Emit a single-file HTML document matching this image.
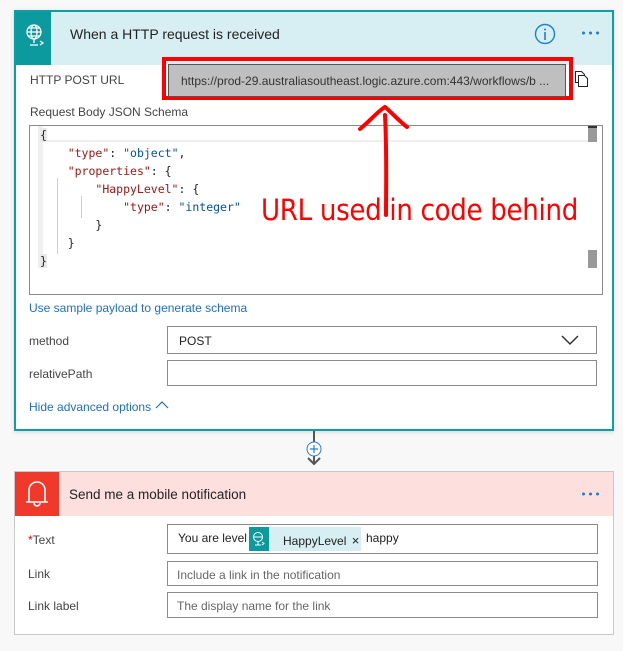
<!DOCTYPE html>
<html><head><meta charset="utf-8"><style>
*{margin:0;padding:0;box-sizing:border-box}
body{width:623px;height:651px;background:#f8f8f8;font-family:"Liberation Sans",sans-serif;position:relative;overflow:hidden;color:#333}
.a{position:absolute}
.lbl{font-size:12px;color:#444}
.inp{position:absolute;background:#fff;border:1px solid #8a8a8a}
.code{font-family:"DejaVu Sans Mono","Liberation Mono",monospace;font-size:11.5px;position:absolute;white-space:pre;color:#222}
.k{color:#a31515}.s{color:#0451a5}
</style></head><body>
<!-- card 1 -->
<div class="a" style="left:14px;top:10px;width:600px;height:421px;border:2px solid #0f9ea4;background:#fff;box-shadow:0 1px 4px rgba(0,0,0,.15)"></div>
<div class="a" style="left:16px;top:12px;width:596px;height:53px;background:#d7eff2"></div>
<div class="a" style="left:16px;top:12px;width:35px;height:53px;background:#0c9a9e"></div>
<svg class="a" style="left:24px;top:23px" width="22" height="26" viewBox="0 0 22 26" fill="none" stroke="#fff" stroke-width="1.3"><circle cx="10" cy="9" r="7"/><ellipse cx="10" cy="9" rx="3" ry="7"/><path d="M3 9h14M4 5h12M4 13h12M10 16v4M6 22h8M16 18l3 2-3 2"/></svg>
<div class="a" style="left:70px;top:26px;font-size:14px;color:#222">When a HTTP request is received</div>
<svg class="a" style="left:534px;top:23px" width="22" height="22"><circle cx="11" cy="11" r="9.5" fill="none" stroke="#1f7fd6" stroke-width="1.4"/><rect x="10.2" y="9" width="1.6" height="8" fill="#1f7fd6"/><circle cx="11" cy="6.5" r="1" fill="#1f7fd6"/></svg>
<div class="a" style="left:580px;top:31px;width:20px;height:4px;background:radial-gradient(circle,#1f7fd6 1.4px,transparent 1.6px) 0 0/7px 4px"></div>
<div class="a lbl" style="left:30px;top:73px">HTTP POST URL</div>
<div class="a" style="left:162px;top:57px;width:411px;height:43px;border:4px solid #f00"></div>
<div class="a" style="left:168px;top:64px;width:398px;height:33px;background:#bfbfbf;border:1px solid #555;font-size:12px;color:#333;padding:9px 0 0 12px">https://prod-29.australiasoutheast.logic.azure.com:443/workflows/b ...</div>
<svg class="a" style="left:572px;top:70px" width="18" height="18" fill="#fff" stroke="#222" stroke-width="1"><path d="M3.5 1.5h6l3 3v8h-9z"/><path d="M6.5 5.5h6l3 3v8h-9z"/></svg>
<div class="a lbl" style="left:30px;top:105px">Request Body JSON Schema</div>
<div class="a" style="left:29px;top:125px;width:574px;height:170px;border:1px solid #8a8a8a;background:#fff"></div>
<div class="a" style="left:38px;top:126px;width:564px;height:16px;border-bottom:2px solid #eee"></div>
<div class="a" style="left:38px;top:126px;width:5px;height:142px;background:#f0f0f0"></div>
<div class="a" style="left:588px;top:126px;width:9px;height:16px;background:#999;border-top:2px solid #333"></div>
<div class="a" style="left:588px;top:250px;width:9px;height:18px;background:#999"></div>
<div class="a" style="left:597px;top:126px;width:5px;height:168px;background:#fff"></div>
<div class="a" style="left:57px;top:178px;width:1px;height:76px;background:#ccc"></div>
<div class="a" style="left:81px;top:196px;width:1px;height:22px;background:#ccc"></div>
<div class="code" style="left:40px;top:126px;line-height:18px"><span style="background:#e8e8e8">{</span>
    <span class="k">"type"</span>: <span class="s">"object"</span>,
    <span class="k">"properties"</span>: {
        <span class="k">"HappyLevel"</span>: {
            <span class="k">"type"</span>: <span class="s">"integer"</span>
        }
    }
<span style="background:#e8e8e8">}</span></div>
<div class="a" style="left:261px;top:193px;font-size:29px;color:#f00;font-family:'DejaVu Sans Condensed','Liberation Sans Narrow',sans-serif;letter-spacing:-0.3px">URL used in code behind</div>
<svg class="a" style="left:350px;top:102px" width="80" height="120" fill="none" stroke="#f00" stroke-width="4" stroke-linecap="round"><path d="M36 113c0-30 1-60 -1-100M10 27c10-8 18-18 25-22c6 5 14 14 22 20"/></svg>
<div class="a" style="left:29px;top:301px;font-size:12px;color:#1f6fc5">Use sample payload to generate schema</div>
<div class="a lbl" style="left:29px;top:334px">method</div>
<div class="inp" style="left:167px;top:326px;width:430px;height:28px;font-size:12px;color:#222;padding:7px 0 0 11px">POST</div>
<svg class="a" style="left:561px;top:334px" width="18" height="12"><path d="M1 2l8 8 8-8" fill="none" stroke="#333" stroke-width="1.5"/></svg>
<div class="a lbl" style="left:29px;top:367px">relativePath</div>
<div class="inp" style="left:167px;top:360px;width:430px;height:26px"></div>
<div class="a" style="left:29px;top:400px;font-size:12px;color:#1f6fc5">Hide advanced options</div>
<svg class="a" style="left:155px;top:400px" width="14" height="10"><path d="M1 8l6-6 6 6" fill="none" stroke="#1f6fc5" stroke-width="1.2"/></svg>
<!-- connector -->
<div class="a" style="left:313px;top:431px;width:2px;height:32px;background:#555"></div>
<svg class="a" style="left:304px;top:439px" width="20" height="30"><circle cx="10" cy="10" r="7" fill="#fff" stroke="#1f7fd6" stroke-width="1"/><path d="M10 6v8M6 10h8" stroke="#1f7fd6" stroke-width="1.2"/><path d="M4 19l6 6 6-6" fill="none" stroke="#555" stroke-width="2"/></svg>
<!-- card 2 -->
<div class="a" style="left:14px;top:471px;width:600px;height:164px;border:1px solid #c8c8c8;background:#fff"></div>
<div class="a" style="left:15px;top:472px;width:598px;height:44px;background:#fde0de"></div>
<div class="a" style="left:15px;top:472px;width:44px;height:44px;background:#f0392b"></div>
<svg class="a" style="left:24px;top:478px" width="26" height="32" fill="none" stroke="#fff" stroke-width="1.6"><path d="M5 24V12a8 8 0 0 1 16 0v12M2 24h22M10 25a3 3 0 0 0 6 0"/></svg>
<div class="a" style="left:69px;top:487px;font-size:13.5px;color:#222">Send me a mobile notification</div>
<div class="a" style="left:580px;top:492px;width:20px;height:4px;background:radial-gradient(circle,#1f7fd6 1.4px,transparent 1.6px) 0 0/7px 4px"></div>
<div class="a lbl" style="left:28px;top:533px"><span style="color:#e00">*</span>Text</div>
<div class="inp" style="left:167px;top:524px;width:431px;height:30px"></div>
<div class="a" style="left:178px;top:531px;font-size:12px;color:#222">You are level</div>
<div class="a" style="left:249px;top:527px;width:20px;height:24px;background:#0c9a9e"></div>
<svg class="a" style="left:252px;top:531px" width="14" height="16" fill="none" stroke="#fff" stroke-width="1"><circle cx="6" cy="6" r="4.5"/><path d="M1.5 6h9M6 10.5v3M3 14h6M10 11l2 1.5-2 1.5"/></svg>
<div class="a" style="left:269px;top:527px;width:92px;height:24px;background:#d7eff2;font-size:12px;color:#222;padding:6px 0 0 14px">HappyLevel <span style="font-size:13px;margin-left:2px">×</span></div>
<div class="a" style="left:366px;top:531px;font-size:12px;color:#222">happy</div>
<div class="a lbl" style="left:28px;top:567px">Link</div>
<div class="inp" style="left:167px;top:561px;width:431px;height:25px;font-size:12px;color:#666;padding:6px 0 0 9px">Include a link in the notification</div>
<div class="a lbl" style="left:28px;top:599px">Link label</div>
<div class="inp" style="left:167px;top:592px;width:431px;height:26px;font-size:12px;color:#666;padding:6px 0 0 9px">The display name for the link</div>
</body></html>
